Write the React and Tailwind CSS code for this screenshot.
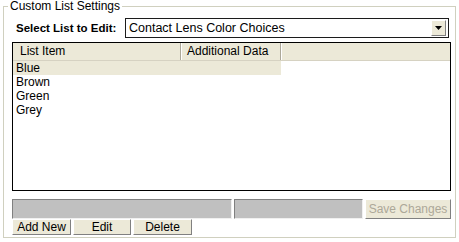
const items = ['Blue', 'Brown', 'Green', 'Grey']

function Raised({ className, children }) {
  return (
    <div
      className={`flex items-center justify-center border border-t-white border-l-white border-r-[#808080] border-b-[#808080] bg-[#ece9d8] ${className}`}
    >
      {children}
    </div>
  )
}

export default function App() {
  return (
    <div className="h-[242px] w-[459px] bg-white px-[3px] font-['Tahoma','Liberation_Sans',sans-serif] text-[12px] leading-[13px] text-black">
      <fieldset className="h-[238px] border border-[#d0d0bf] p-0">
        <legend className="ml-[4px] px-[2px] leading-[13px]">Custom List Settings</legend>
        <div className="pl-[8px] pr-[4px]">
          <div className="mt-[5px] flex h-[20px] items-center">
            <span className="ml-[4px] w-[109px] text-[11.5px] font-bold">Select List to Edit:</span>
            <div className="flex h-[20px] w-[324px] items-center border border-[#1c1c1c] bg-white pl-[3px] pr-[2px]">
              <span className="flex-1 text-[12.5px]">Contact Lens Color Choices</span>
              <Raised className="h-[16px] w-[15px]">
                <svg width="7" height="4" viewBox="0 0 7 4">
                  <path d="M0 0h7L3.5 4z" fill="#000" />
                </svg>
              </Raised>
            </div>
          </div>

          <div className="mt-[4px] h-[149px] w-[439px] border border-black bg-white">
            <div className="flex h-[18px] border-b border-[#d6d2c2] bg-[#ece9d8]">
              <div className="flex w-[168px] items-center border-r border-r-[#aca899] pl-[7px]">List Item</div>
              <div className="flex w-[100px] items-center border-l border-r border-l-white border-r-[#aca899] pl-[5px]">
                Additional Data
              </div>
              <div className="flex-1 border-l border-l-white" />
            </div>
            {items.map((item, i) => (
              <div
                key={item}
                className={`flex h-[14px] w-[268px] items-center pl-[3px] ${i === 0 ? 'bg-[#ece9d8]' : ''}`}
              >
                {item}
              </div>
            ))}
          </div>

          <div className="mt-[8px] flex h-[20px] gap-[2px]">
            <div className="w-[220px] border border-t-[#808080] border-l-[#808080] border-r-[#f0f0f0] border-b-[#f0f0f0] bg-[#c0c0c0]" />
            <div className="w-[129px] border border-t-[#808080] border-l-[#808080] border-r-[#f0f0f0] border-b-[#f0f0f0] bg-[#c0c0c0]" />
            <Raised className="w-[86px] text-[#aca899]">Save Changes</Raised>
          </div>

          <div className="flex h-[16px] gap-[2px]">
            <Raised className="w-[59px]">Add New</Raised>
            <Raised className="w-[58px]">Edit</Raised>
            <Raised className="w-[59px]">Delete</Raised>
          </div>
        </div>
      </fieldset>
    </div>
  )
}
